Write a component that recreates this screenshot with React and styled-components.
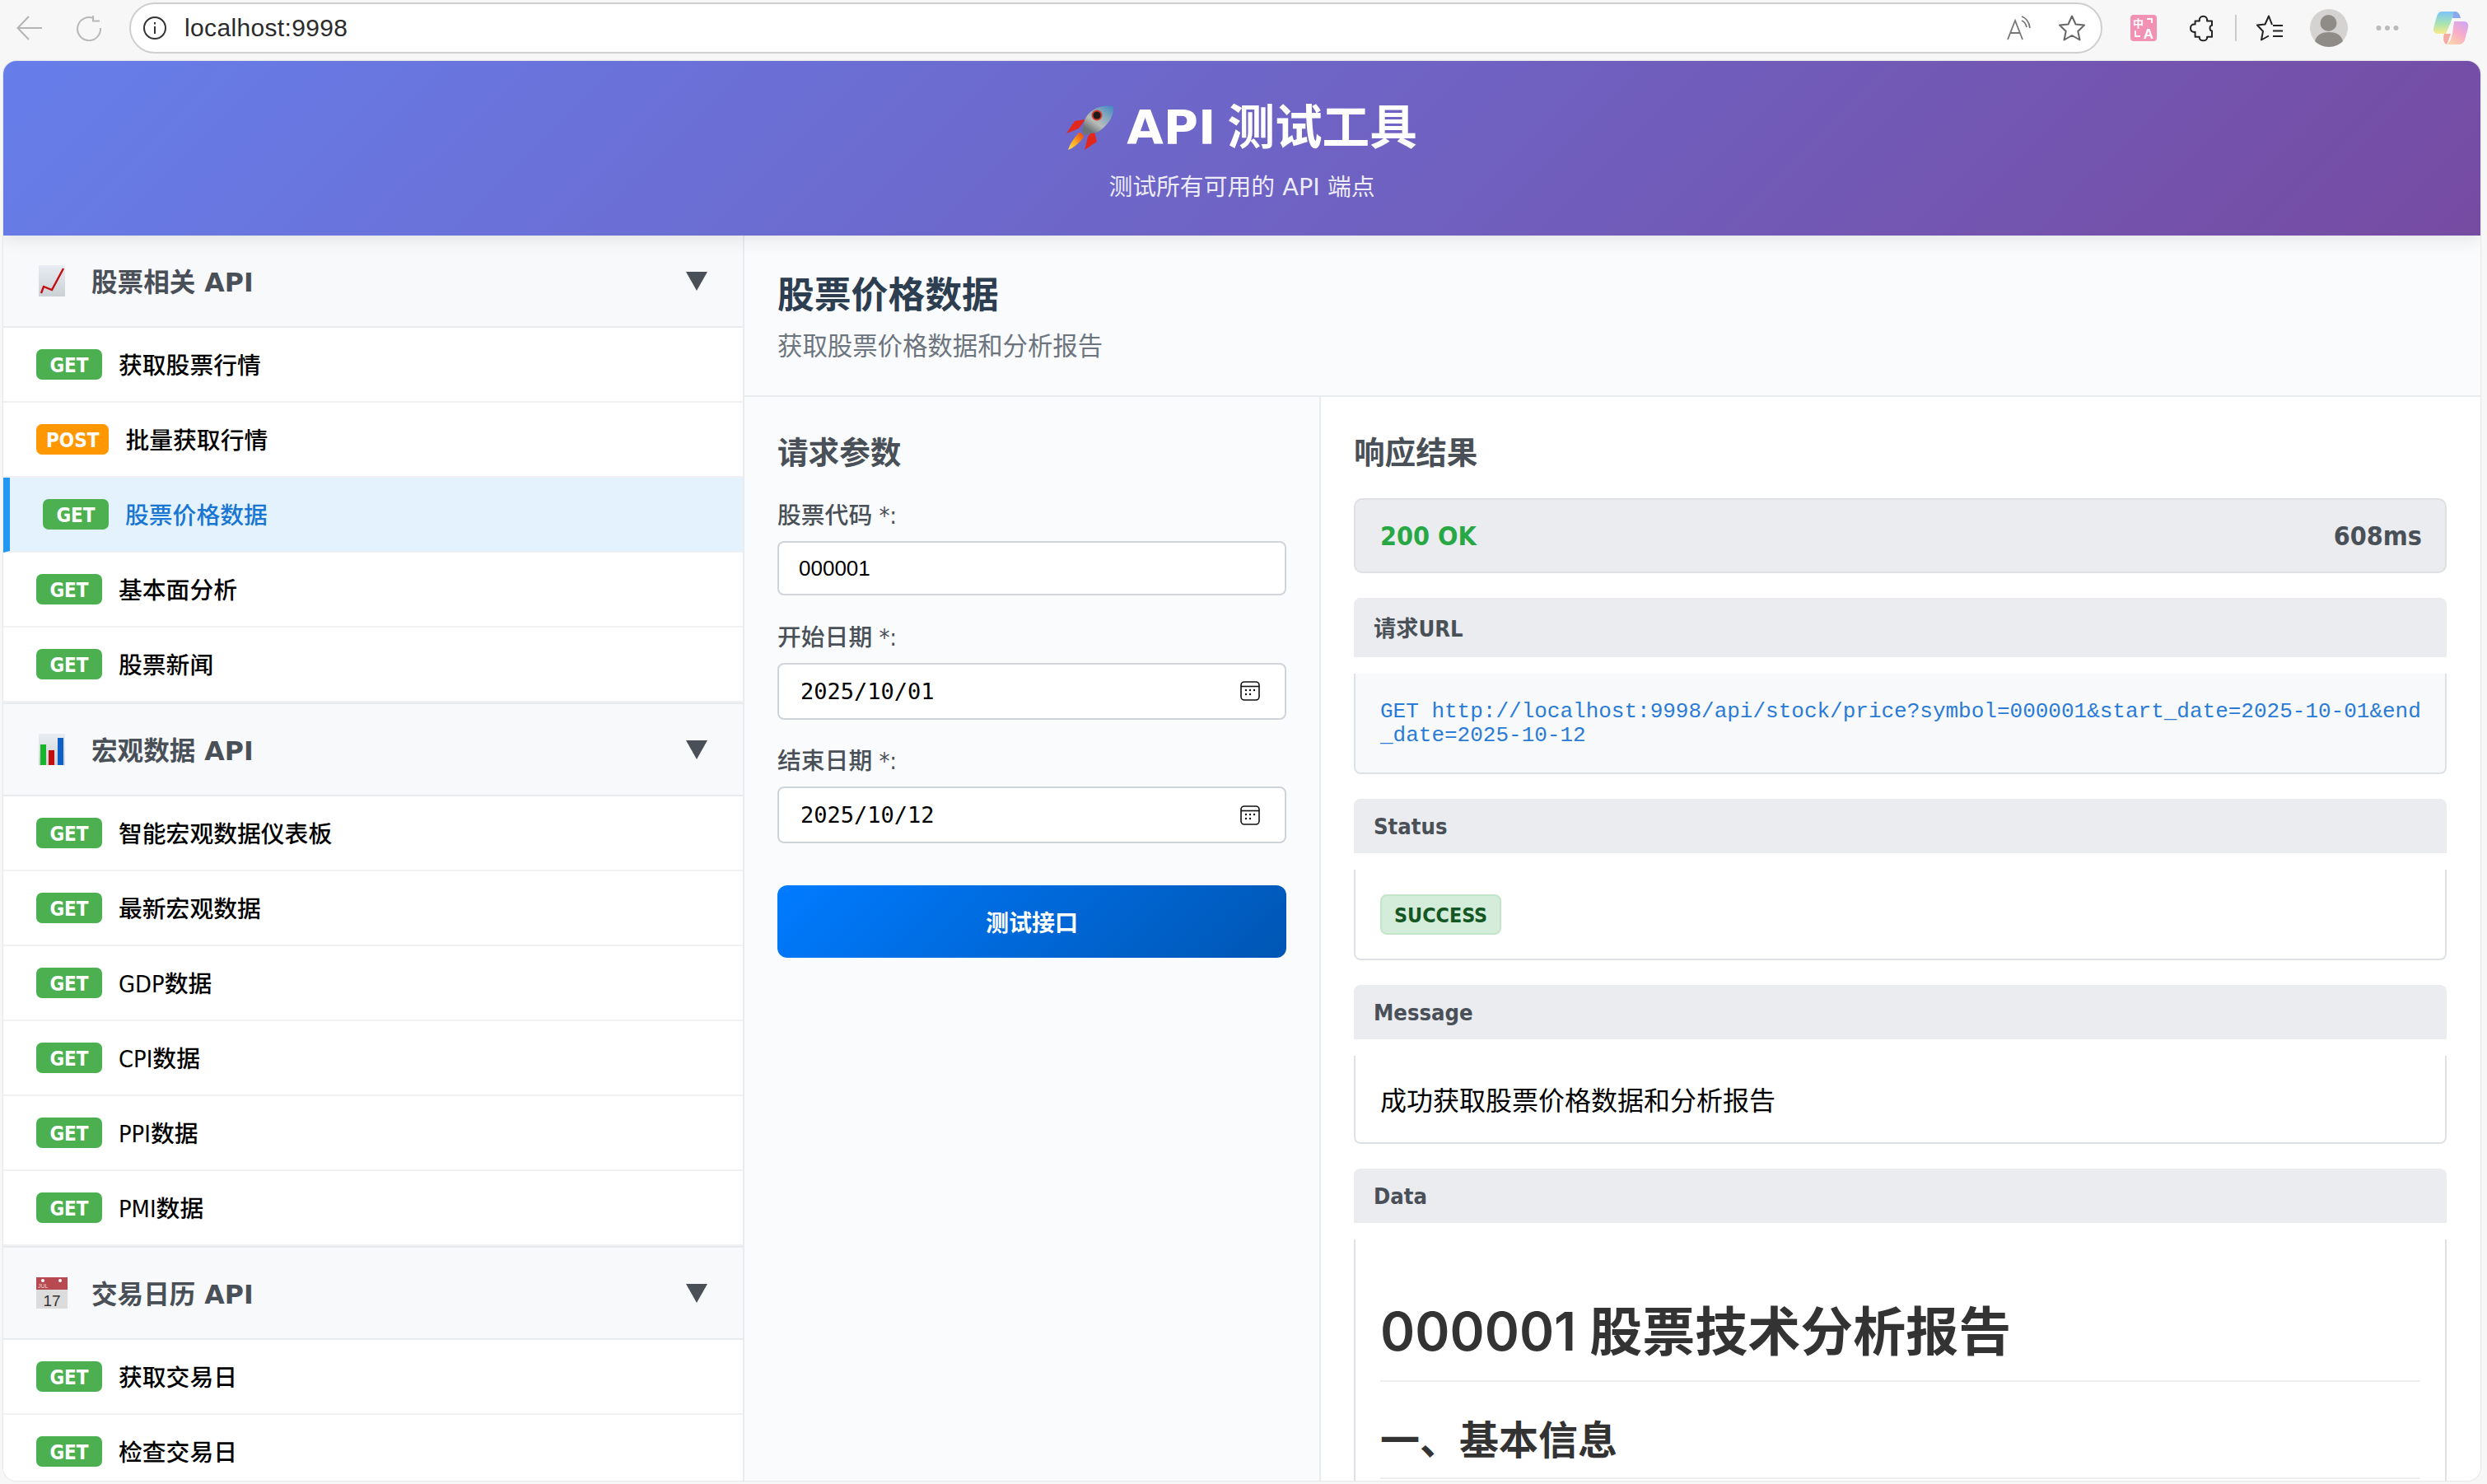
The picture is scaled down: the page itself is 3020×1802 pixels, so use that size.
import React from 'react'
import styled, { createGlobalStyle } from 'styled-components'

const SANS = `'DejaVu Sans', 'Noto Sans CJK SC', sans-serif`
const COND = `'DejaVu Sans Condensed', 'DejaVu Sans', 'Noto Sans CJK SC', sans-serif`

const GlobalStyle = createGlobalStyle`
  html, body {
    margin: 0;
    padding: 0;
    width: 3020px;
    height: 1802px;
    overflow: hidden;
    background: #f7f7f7;
    font-family: ${SANS};
  }
  * { box-sizing: border-box; }
`

const groups = [
  {
    icon: 'line',
    title: '股票相关 API',
    items: [
      ['GET', '获取股票行情'],
      ['POST', '批量获取行情'],
      ['GET', '股票价格数据', true],
      ['GET', '基本面分析'],
      ['GET', '股票新闻'],
    ],
  },
  {
    icon: 'bars',
    title: '宏观数据 API',
    items: [
      ['GET', '智能宏观数据仪表板'],
      ['GET', '最新宏观数据'],
      ['GET', 'GDP数据'],
      ['GET', 'CPI数据'],
      ['GET', 'PPI数据'],
      ['GET', 'PMI数据'],
    ],
  },
  {
    icon: 'calendar',
    title: '交易日历 API',
    items: [
      ['GET', '获取交易日'],
      ['GET', '检查交易日'],
    ],
  },
]

function ChartEmoji() {
  return (
    <svg width="32" height="38" viewBox="0 0 32 38">
      <defs>
        <linearGradient id="cardBg" x1="0" y1="0" x2="0" y2="1">
          <stop offset="0" stopColor="#e8edf3" />
          <stop offset="1" stopColor="#ccd1d6" />
        </linearGradient>
      </defs>
      <rect width="32" height="38" fill="url(#cardBg)" />
      <polyline points="3,34 6,26 16,30 30,4" fill="none" stroke="#c40d0d" strokeWidth="2.4" />
    </svg>
  )
}

function BarsEmoji() {
  return (
    <svg width="32" height="38" viewBox="0 0 32 38">
      <rect width="32" height="38" fill="url(#cardBg)" />
      <rect x="2" y="13" width="7" height="25" fill="#16b52c" />
      <rect x="12" y="20" width="7" height="18" fill="#c40d0d" />
      <rect x="23" y="5" width="7" height="33" fill="#0f5fc8" />
    </svg>
  )
}

function CalendarEmoji() {
  return (
    <svg width="38" height="38" viewBox="0 0 38 38">
      <rect width="38" height="38" fill="#dcdcdc" />
      <rect width="38" height="15" fill="#b64a50" />
      <circle cx="8" cy="4" r="2" fill="#fff" />
      <circle cx="29" cy="4" r="2" fill="#fff" />
      <text x="2" y="13" fontSize="7" fill="#f1d9da" fontFamily="'Liberation Sans', sans-serif">JUL</text>
      <text x="19" y="35" fontSize="19" textAnchor="middle" fill="#333" fontFamily="'Liberation Sans', sans-serif">17</text>
    </svg>
  )
}

function RocketEmoji() {
  return (
    <svg width="57" height="56" viewBox="0 0 57 56">
      <defs>
        <linearGradient id="rocketBody" x1="1" y1="0" x2="0.3" y2="0.9">
          <stop offset="0" stopColor="#3d86c6" />
          <stop offset="0.35" stopColor="#7fa6bd" />
          <stop offset="0.7" stopColor="#b9bdb9" />
          <stop offset="1" stopColor="#6d7478" />
        </linearGradient>
        <linearGradient id="rocketFlame" x1="1" y1="0" x2="0" y2="1">
          <stop offset="0" stopColor="#e8420f" />
          <stop offset="0.6" stopColor="#ffb020" />
          <stop offset="1" stopColor="#ffe060" />
        </linearGradient>
      </defs>
      <polygon points="23,17 10,19 0,34 15,28" fill="#e2281c" />
      <polygon points="33,28 37,44 22,54 26,38" fill="#e2281c" />
      <path d="M15 33 C19 33 21 36 21 39 C15 46 8 52 2 54 C4 47 9 40 15 33Z" fill="url(#rocketFlame)" />
      <path d="M57 1C58 12 52 21 45 27C40 32 35 34 30 34L21 36L19 30L21 22C22 16 25 12 29 8C36 2 46 -1 57 1Z" fill="url(#rocketBody)" />
      <circle cx="37" cy="12" r="6.5" fill="#d93a2e" />
      <circle cx="37" cy="12" r="4.6" fill="#1c1c1c" />
    </svg>
  )
}

const emojis = { line: ChartEmoji, bars: BarsEmoji, calendar: CalendarEmoji }

function CalendarIcon() {
  return (
    <svg width="24" height="24" viewBox="0 0 24 24" fill="none" stroke="#111" strokeWidth="1.6">
      <rect x="1" y="1" width="22" height="22" rx="4" />
      <path d="M1 6.5H23" />
      <g fill="#111" stroke="none">
        <circle cx="7" cy="11" r="1.2" /><circle cx="12" cy="11" r="1.2" /><circle cx="17" cy="11" r="1.2" />
        <circle cx="7" cy="16" r="1.2" /><circle cx="12" cy="16" r="1.2" />
      </g>
    </svg>
  )
}

function Toolbar() {
  return (
    <ChromeBar>
      <IconSlot $gap={0} $w={32}>
        <svg width="32" height="30" viewBox="0 0 32 30" fill="none" stroke="#b4b4b4" strokeWidth="2">
          <path d="M31 15H2M15 1L1.5 15L15 29" />
        </svg>
      </IconSlot>
      <IconSlot $gap={40} $w={32}>
        <svg width="32" height="32" viewBox="0 0 32 32" fill="none" stroke="#b8b8b8" strokeWidth="2">
          <path d="M22 4.5A14 14 0 1 0 30 16" />
          <path d="M21 1V7.5H29" />
        </svg>
      </IconSlot>
      <AddressBar>
        <svg width="28" height="28" viewBox="0 0 28 28" fill="none" stroke="#333" strokeWidth="2">
          <circle cx="14" cy="14" r="13" />
          <path d="M14 12V21M14 7V9.5" />
        </svg>
        <UrlText>localhost:9998</UrlText>
        <AddressIcons>
          <svg width="31" height="30" viewBox="0 0 31 30" fill="none" stroke="#777" strokeWidth="1.8">
            <path d="M1 29L10 6L19 29M4 21H16" />
            <path d="M18 1C24 3 27 8 28 15M18 6C21 7 23 10 24 14" />
          </svg>
          <svg width="32" height="32" viewBox="0 0 32 32" fill="none" stroke="#666" strokeWidth="2" strokeLinejoin="round">
            <polygon points="16,1.5 20.5,11.5 31,12.5 23.3,20 25.5,30.5 16,25 6.5,30.5 8.7,20 1,12.5 11.5,11.5" />
          </svg>
        </AddressIcons>
      </AddressBar>
      <IconSlot $gap={34} $w={32}>
        <svg width="32" height="32" viewBox="0 0 32 32">
          <rect width="32" height="32" rx="4" fill="#f291b3" />
          <text x="9.5" y="15" fontSize="13" fontWeight="700" textAnchor="middle" fill="#fff" fontFamily="'Noto Sans CJK SC', sans-serif">中</text>
          <text x="22" y="29" fontSize="17" fontWeight="700" textAnchor="middle" fill="#fff" fontFamily="'Liberation Sans', sans-serif">A</text>
          <path d="M20 5H26V10M6 19V26H12" fill="none" stroke="#fff" strokeWidth="1.8" />
        </svg>
      </IconSlot>
      <IconSlot $gap={40} $w={29}>
        <svg width="29" height="33" viewBox="268 38 88 98" fill="none" stroke="#222" strokeWidth="6" strokeLinejoin="round">
          <path d="M288 60H304C302 48 310 42 318 42C326 42 334 48 332 60H350V76C340 76 340 96 350 96V118H332C334 128 326 132 318 132C310 132 302 128 304 118H288V100C276 102 271 94 271 86C271 78 276 70 288 72Z" />
        </svg>
      </IconSlot>
      <Divider />
      <IconSlot $gap={24} $w={32}>
        <svg width="32" height="32" viewBox="0 0 32 32" fill="none" stroke="#222" strokeWidth="2" strokeLinejoin="round">
          <path d="M19 12L15 1.5L10.5 11.5L1 12.5L8 20L6 30.5L15 25.5" />
          <path d="M20 13H32M20 19.5H32M20 26H32" />
        </svg>
      </IconSlot>
      <IconSlot $gap={33} $w={46}>
        <svg width="46" height="46" viewBox="0 0 46 46">
          <circle cx="23" cy="23" r="23" fill="#d4d3d1" />
          <ellipse cx="22.5" cy="17" rx="10" ry="10" fill="#8f8c88" />
          <path d="M6 39C8 31 15 28 23 28C31 28 38 31 40 39C36 43 30 46 23 46C16 46 10 43 6 39Z" fill="#8f8c88" />
        </svg>
      </IconSlot>
      <IconSlot $gap={34} $w={28}>
        <svg width="28" height="8" viewBox="0 0 28 8" fill="#bbb">
          <circle cx="3.5" cy="4" r="3" /><circle cx="14" cy="4" r="3" /><circle cx="24.5" cy="4" r="3" />
        </svg>
      </IconSlot>
      <IconSlot $gap={41} $w={44}>
        <svg width="44" height="42" viewBox="0 0 44 42">
          <defs>
            <linearGradient id="copA" x1="0" y1="0" x2="0" y2="1">
              <stop offset="0" stopColor="#7cc4f8" />
              <stop offset="0.55" stopColor="#a9e4b0" />
              <stop offset="1" stopColor="#fbe98c" />
            </linearGradient>
            <linearGradient id="copB" x1="0.8" y1="0" x2="0.2" y2="1">
              <stop offset="0" stopColor="#d3a5f2" />
              <stop offset="0.5" stopColor="#f8adc8" />
              <stop offset="1" stopColor="#fdd2a8" />
            </linearGradient>
          </defs>
          <path d="M11 1H30C26 3 24 7 22 14L16 28H7C3 28 0.5 26 1 21L5 7C6 3 8 1 11 1Z" fill="url(#copA)" />
          <path d="M26 1C31 1 33 4 34 9H24C25 5 25 3 26 1Z" fill="#8aa8ee" />
          <path d="M14 28H22C20 33 19 37 17 41C14 40 12 35 14 28Z" fill="#f6a9a0" />
          <path d="M26 13H38C42 13 44 16 43 21L39 35C38 39 35 41 31 41H18C21 38 23 33 24 28Z" fill="url(#copB)" />
        </svg>
      </IconSlot>
    </ChromeBar>
  )
}

function Sidebar() {
  return (
    <SideColumn>
      {groups.map((g) => {
        const Emoji = emojis[g.icon]
        return (
          <Group key={g.title}>
            <GroupHeader>
              <EmojiSlot><Emoji /></EmojiSlot>
              <GroupTitle>{g.title}</GroupTitle>
              <svg width="26" height="23" viewBox="0 0 26 23">
                <polygon points="0,0 26,0 13,23" fill="#495057" />
              </svg>
            </GroupHeader>
            {g.items.map(([method, label, active]) => (
              <Item key={label} $active={active}>
                <Badge $post={method === 'POST'}>{method}</Badge>
                <ItemLabel $active={active}>{label}</ItemLabel>
              </Item>
            ))}
          </Group>
        )
      })}
    </SideColumn>
  )
}

function App() {
  return (
    <>
      <GlobalStyle />
      <Toolbar />
      <Frame>
        <Banner>
          <BannerTitle><RocketEmoji /><span>API 测试工具</span></BannerTitle>
          <BannerSub>测试所有可用的 API 端点</BannerSub>
        </Banner>
        <Body>
          <Sidebar />
          <Main>
            <MainHeader>
              <MainTitle>股票价格数据</MainTitle>
              <MainSub>获取股票价格数据和分析报告</MainSub>
            </MainHeader>
            <Panels>
              <ParamPanel>
                <ParamTitle>请求参数</ParamTitle>
                <FieldGroup>
                  <FieldLabel>股票代码 *:</FieldLabel>
                  <TextInput value="000001" readOnly />
                </FieldGroup>
                <FieldGroup>
                  <FieldLabel>开始日期 *:</FieldLabel>
                  <DateBox>2025/10/01<CalendarIcon /></DateBox>
                </FieldGroup>
                <FieldGroup>
                  <FieldLabel>结束日期 *:</FieldLabel>
                  <DateBox>2025/10/12<CalendarIcon /></DateBox>
                </FieldGroup>
                <TestButton>测试接口</TestButton>
              </ParamPanel>
              <ResultPanel>
                <PanelTitle>响应结果</PanelTitle>
                <StatusBar>
                  <StatusCode>200 OK</StatusCode>
                  <StatusTime>608ms</StatusTime>
                </StatusBar>
                <SectionHead $tall>请求URL</SectionHead>
                <UrlBox>GET http://localhost:9998/api/stock/price?symbol=000001&amp;start_date=2025-10-01&amp;end_date=2025-10-12</UrlBox>
                <SectionHead>Status</SectionHead>
                <StatusBox><SuccessTag>SUCCESS</SuccessTag></StatusBox>
                <SectionHead>Message</SectionHead>
                <MessageBox>成功获取股票价格数据和分析报告</MessageBox>
                <SectionHead>Data</SectionHead>
                <DataBox>
                  <ReportTitle>000001 股票技术分析报告</ReportTitle>
                  <ReportHeading>一、基本信息</ReportHeading>
                </DataBox>
              </ResultPanel>
            </Panels>
          </Main>
        </Body>
      </Frame>
    </>
  )
}

export default App

const ChromeBar = styled.div`
  height: 74px;
  padding: 3px 22px 9px 20px;
  display: flex;
  align-items: center;
  background: #f7f7f7;
`

const IconSlot = styled.div`
  flex: none;
  width: ${(p) => p.$w}px;
  margin-left: ${(p) => p.$gap}px;
  display: flex;
  align-items: center;
  justify-content: center;
`

const AddressBar = styled.div`
  flex: 1;
  height: 62px;
  margin-left: 33px;
  padding: 0 19px 0 15px;
  display: flex;
  align-items: center;
  background: #fff;
  border: 2px solid #cfcfcf;
  border-radius: 31px;
`

const UrlText = styled.span`
  margin-left: 22px;
  font-family: 'Liberation Sans', sans-serif;
  font-size: 30px;
  letter-spacing: 0.35px;
  color: #2b2b2b;
`

const AddressIcons = styled.div`
  margin-left: auto;
  display: flex;
  align-items: center;
  gap: 32px;
`

const Divider = styled.div`
  width: 2px;
  height: 32px;
  margin-left: 26px;
  background: #ccc;
`

const Frame = styled.div`
  height: 1724px;
  margin: 0 8px 4px 4px;
  display: flex;
  flex-direction: column;
  overflow: hidden;
  background: #fff;
  border-radius: 16px;
  box-shadow: 0 0 2px rgba(0, 0, 0, 0.22);
`

const Banner = styled.header`
  flex: none;
  position: relative;
  z-index: 1;
  height: 212px;
  padding-top: 46px;
  display: flex;
  flex-direction: column;
  align-items: center;
  color: #fff;
  background: linear-gradient(135deg, #667eea 0%, #764ba2 100%);
  box-shadow: 0 4px 20px rgba(0, 0, 0, 0.1);
`

const BannerTitle = styled.h1`
  margin: 0;
  display: flex;
  align-items: center;
  gap: 16px;
  height: 72px;
  font-size: 57.6px;
  line-height: 72px;
  font-weight: 700;
  word-spacing: -6px;
`

const BannerSub = styled.p`
  margin: 15px 0 0;
  font-size: 28.8px;
  line-height: 40px;
  color: rgba(255, 255, 255, 0.9);
`

const Body = styled.div`
  flex: 1;
  min-height: 0;
  display: flex;
`

const SideColumn = styled.aside`
  flex: none;
  width: 900px;
  overflow: hidden;
  background: #fff;
  border-right: 2px solid #e9ecef;
`

const Group = styled.section`
  border-bottom: 2px solid #e9ecef;
`

const GroupHeader = styled.div`
  height: 112px;
  padding: 0 43px 0 40px;
  display: flex;
  align-items: center;
  background: #f8f9fa;
  border-bottom: 2px solid #e9ecef;
`

const EmojiSlot = styled.span`
  flex: none;
  width: 38px;
  display: flex;
  justify-content: center;
`

const GroupTitle = styled.span`
  flex: 1;
  margin-left: 29px;
  padding-bottom: 2px;
  font-size: 31.6px;
  font-weight: 700;
  color: #495057;
`

const Item = styled.div`
  height: 91px;
  padding-left: 40px;
  display: flex;
  align-items: center;
  gap: 20px;
  background: ${(p) => (p.$active ? '#e3f2fd' : '#fff')};
  border-bottom: 2px solid #f1f1f3;
  border-left: ${(p) => (p.$active ? '8px solid #2196f3' : 'none')};
`

const Badge = styled.span`
  flex: none;
  min-width: 80px;
  height: 37px;
  padding: 0 12px;
  font-family: ${COND};
  font-size: 24px;
  font-weight: 700;
  line-height: 41px;
  text-align: center;
  color: #fff;
  background: ${(p) => (p.$post ? '#ff9800' : '#4caf50')};
  border-radius: 7px;
`

const ItemLabel = styled.span`
  padding-bottom: 2px;
  font-family: ${COND};
  font-size: 28.8px;
  font-weight: 500;
  color: ${(p) => (p.$active ? '#1976d2' : '#000')};
`

const Main = styled.main`
  flex: 1;
  min-width: 0;
  display: flex;
  flex-direction: column;
`

const MainHeader = styled.div`
  flex: none;
  height: 196px;
  padding: 43px 40px 0;
  background: #fafbfd;
  border-bottom: 2px solid #e9ecef;
`

const MainTitle = styled.h2`
  margin: 0;
  font-size: 44.8px;
  line-height: 60px;
  font-weight: 700;
  color: #2c3e50;
`

const MainSub = styled.p`
  margin: 10px 0 0;
  font-size: 30.4px;
  line-height: 44px;
  color: #6c757d;
`

const Panels = styled.div`
  flex: 1;
  min-height: 0;
  display: flex;
`

const ParamPanel = styled.div`
  flex: none;
  width: 700px;
  padding: 42px 40px 40px;
  background: #fafbfd;
  border-right: 2px solid #e9ecef;
`

const PanelTitle = styled.h3`
  margin: 2px 0 29px;
  font-size: 37.6px;
  line-height: 52px;
  font-weight: 700;
  color: #495057;
`

const ParamTitle = styled(PanelTitle)`
  margin: 0 0 31px;
`

const FieldGroup = styled.div`
  margin-bottom: 31.5px;
`

const FieldLabel = styled.label`
  display: block;
  margin: 0 0 12px;
  font-family: ${COND};
  font-size: 28.8px;
  line-height: 38px;
  font-weight: 500;
  color: #495057;
`

const TextInput = styled.input`
  display: block;
  width: 100%;
  height: 66px;
  padding: 0 24px;
  font-family: 'Liberation Sans', sans-serif;
  font-size: 26px;
  color: #000;
  background: #fff;
  border: 2px solid #ced4da;
  border-radius: 8px;
  outline: none;
`

const DateBox = styled.div`
  height: 69px;
  padding: 0 30px 0 26px;
  display: flex;
  align-items: center;
  justify-content: space-between;
  font-family: 'DejaVu Sans Mono', monospace;
  font-size: 27px;
  color: #000;
  background: #fff;
  border: 2px solid #ced4da;
  border-radius: 8px;
`

const TestButton = styled.button`
  display: block;
  width: 100%;
  height: 88px;
  margin-top: 51px;
  padding: 0;
  font-family: ${SANS};
  font-size: 28px;
  font-weight: 700;
  color: #fff;
  background: linear-gradient(135deg, #007bff 0%, #0056b3 100%);
  border: none;
  border-radius: 12px;
`

const ResultPanel = styled.div`
  flex: 1;
  min-width: 0;
  padding: 40px 41px 0 40px;
  overflow: hidden;
  background: #fff;
`

const StatusBar = styled.div`
  height: 91px;
  margin-bottom: 30px;
  padding: 0 28px 0 30px;
  display: flex;
  align-items: center;
  justify-content: space-between;
  font-family: ${COND};
  font-size: 32px;
  font-weight: 700;
  background: #ebecf0;
  border: 2px solid #dee0e4;
  border-radius: 10px;
`

const StatusCode = styled.span`
  color: #28a745;
`

const StatusTime = styled.span`
  color: #495057;
`

const SectionHead = styled.div`
  height: ${(p) => (p.$tall ? 72 : 66)}px;
  margin-bottom: 20px;
  padding: ${(p) => (p.$tall ? '0 0 2px 24px' : '1px 0 0 24px')};
  display: flex;
  align-items: center;
  font-family: ${COND};
  font-size: 27.2px;
  font-weight: 700;
  color: #495057;
  background: #ebecf0;
  border-radius: 8px 8px 0 0;
`

const ContentBox = styled.div`
  margin-bottom: 30px;
  padding: 0 30px;
  border: 2px solid #dee2e6;
  border-top: none;
  border-radius: 0 0 8px 8px;
`

const UrlBox = styled(ContentBox)`
  height: 122px;
  padding: 32px 24px 0 30px;
  font-family: 'Liberation Mono', monospace;
  font-size: 26px;
  line-height: 29.3px;
  word-break: break-all;
  color: #2a7bd6;
  background: #f8f9fa;
`

const StatusBox = styled(ContentBox)`
  height: 110px;
  padding-top: 30px;
`

const SuccessTag = styled.div`
  width: fit-content;
  height: 49px;
  padding: 0 15px;
  font-family: ${COND};
  font-size: 24.8px;
  font-weight: 700;
  line-height: 47px;
  color: #155724;
  background: #d4edda;
  border: 2px solid #c3e6cb;
  border-radius: 8px;
`

const MessageBox = styled(ContentBox)`
  height: 107px;
  padding-bottom: 2px;
  display: flex;
  align-items: center;
  font-size: 32px;
  color: #000;
`

const DataBox = styled(ContentBox)`
  padding-top: 71px;
  height: 400px;
`

const ReportTitle = styled.div`
  padding-bottom: 18px;
  font-family: Inter, 'Noto Sans CJK SC', sans-serif;
  font-size: 64px;
  line-height: 82px;
  font-weight: 600;
  color: #333;
  border-bottom: 2px solid #eee;
`

const ReportHeading = styled.div`
  margin-top: 41px;
  padding-bottom: 15px;
  font-family: Inter, 'Noto Sans CJK SC', sans-serif;
  font-size: 48px;
  line-height: 60px;
  font-weight: 600;
  color: #333;
  border-bottom: 2px solid #eee;
`
